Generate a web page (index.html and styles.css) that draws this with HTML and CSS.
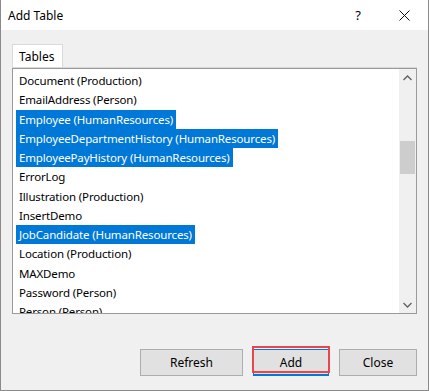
FILE: index.html
```html
<!DOCTYPE html>
<html lang="en">
<head>
    <meta charset="UTF-8">
    <title>Add Table</title>
    <link rel="stylesheet" href="styles.css">
</head>
<body>
    <div class="window">
        <div class="titlebar">
            <span class="title">Add Table</span>
            <span class="help">?</span>
            <span class="close-x">
                <svg width="11" height="11" viewBox="0 0 11 11"><path d="M0.5 0.5 L10.5 10.5 M10.5 0.5 L0.5 10.5" stroke="#111" stroke-width="1" fill="none"/></svg>
            </span>
        </div>
        <div class="content">
            <div class="tabs">
                <div class="tab">Tables</div>
            </div>
            <div class="panel">
                <div class="listbox">
                    <ul class="items">
                        <li><span>Document (Production)</span></li>
                        <li><span>EmailAddress (Person)</span></li>
                        <li><span class="selected">Employee (HumanResources)</span></li>
                        <li><span class="selected">EmployeeDepartmentHistory (HumanResources)</span></li>
                        <li><span class="selected">EmployeePayHistory (HumanResources)</span></li>
                        <li><span>ErrorLog</span></li>
                        <li><span>Illustration (Production)</span></li>
                        <li><span>InsertDemo</span></li>
                        <li><span class="selected">JobCandidate (HumanResources)</span></li>
                        <li><span>Location (Production)</span></li>
                        <li><span>MAXDemo</span></li>
                        <li><span>Password (Person)</span></li>
                        <li><span>Person (Person)</span></li>
                    </ul>
                    <div class="scrollbar">
                        <div class="arrow">
                            <svg width="9" height="6" viewBox="0 0 9 6"><path d="M0.5 5 L4.5 1 L8.5 5" stroke="#606060" stroke-width="1.3" fill="none"/></svg>
                        </div>
                        <div class="track">
                            <div class="thumb"></div>
                        </div>
                        <div class="arrow">
                            <svg width="9" height="6" viewBox="0 0 9 6"><path d="M0.5 1 L4.5 5 L8.5 1" stroke="#606060" stroke-width="1.3" fill="none"/></svg>
                        </div>
                    </div>
                </div>
            </div>
            <div class="buttons">
                <button class="button refresh">Refresh</button>
                <button class="button default">Add</button>
                <button class="button">Close</button>
            </div>
        </div>
    </div>
</body>
</html>
```

FILE: styles.css
```css
body {
    margin: 0;
    font-family: "Noto Sans", "Open Sans", sans-serif;
    font-size: 12px;
    color: #000;
    background: #f0f0f0;
}

.window {
    width: 429px;
    height: 391px;
    box-sizing: border-box;
    border: 1px solid #8a8a8a;
    border-top: none;
    background: #f0f0f0;
    display: flex;
    flex-direction: column;
}

.titlebar {
    height: 30px;
    background: #fff;
    display: flex;
    align-items: center;
    padding-left: 7px;
    padding-right: 18px;
}

.title {
    flex: 1;
}

.help {
    font-size: 13px;
    margin-right: 38px;
}

.close-x {
    display: flex;
    align-items: center;
}

.content {
    flex: 1;
    padding: 14px 11px 0 11px;
}

.tabs {
    display: flex;
}

.tab {
    height: 22px;
    background: #fff;
    border: 1px solid #d9d9d9;
    border-bottom: none;
    padding-left: 6px;
    line-height: 23px;
    width: 43px;
}

.panel {
    border-top: 1px solid #d9d9d9;
}

.listbox {
    height: 244px;
    border: 1px solid #9a9a9a;
    background: #fff;
    display: flex;
    overflow: hidden;
}

.items {
    flex: 1;
    list-style: none;
    margin: 0;
    padding: 2px 0 0 3px;
    font-size: 11.5px;
    letter-spacing: -0.15px;
}

.items li {
    height: 19.25px;
    line-height: 19.25px;
    white-space: nowrap;
}

.items span {
    display: inline-block;
    padding: 0 3px;
}

.items .selected {
    background: #0078d7;
    color: #fff;
}

.scrollbar {
    width: 17px;
    background: #f0f0f0;
    display: flex;
    flex-direction: column;
}

.arrow {
    height: 17px;
    display: flex;
    align-items: center;
    justify-content: center;
}

.track {
    flex: 1;
    padding-top: 55px;
}

.thumb {
    height: 33px;
    margin: 0 1px;
    background: #cdcdcd;
}

.buttons {
    display: flex;
    justify-content: flex-end;
    gap: 10px;
    margin-top: 35px;
}

.button {
    height: 27px;
    width: 78px;
    background: #e1e1e1;
    border: 1px solid #adadad;
    font-family: inherit;
    font-size: 12px;
    color: #000;
    padding: 0;
}

.refresh {
    width: 103px;
}

.default {
    width: 76px;
    border: 1px solid #0078d7;
    border-bottom-width: 2px;
    position: relative;
}

.default::after {
    content: "";
    position: absolute;
    top: -4px;
    left: -2px;
    right: -2px;
    bottom: 1px;
    border: 2px solid #e8454c;
}
```
